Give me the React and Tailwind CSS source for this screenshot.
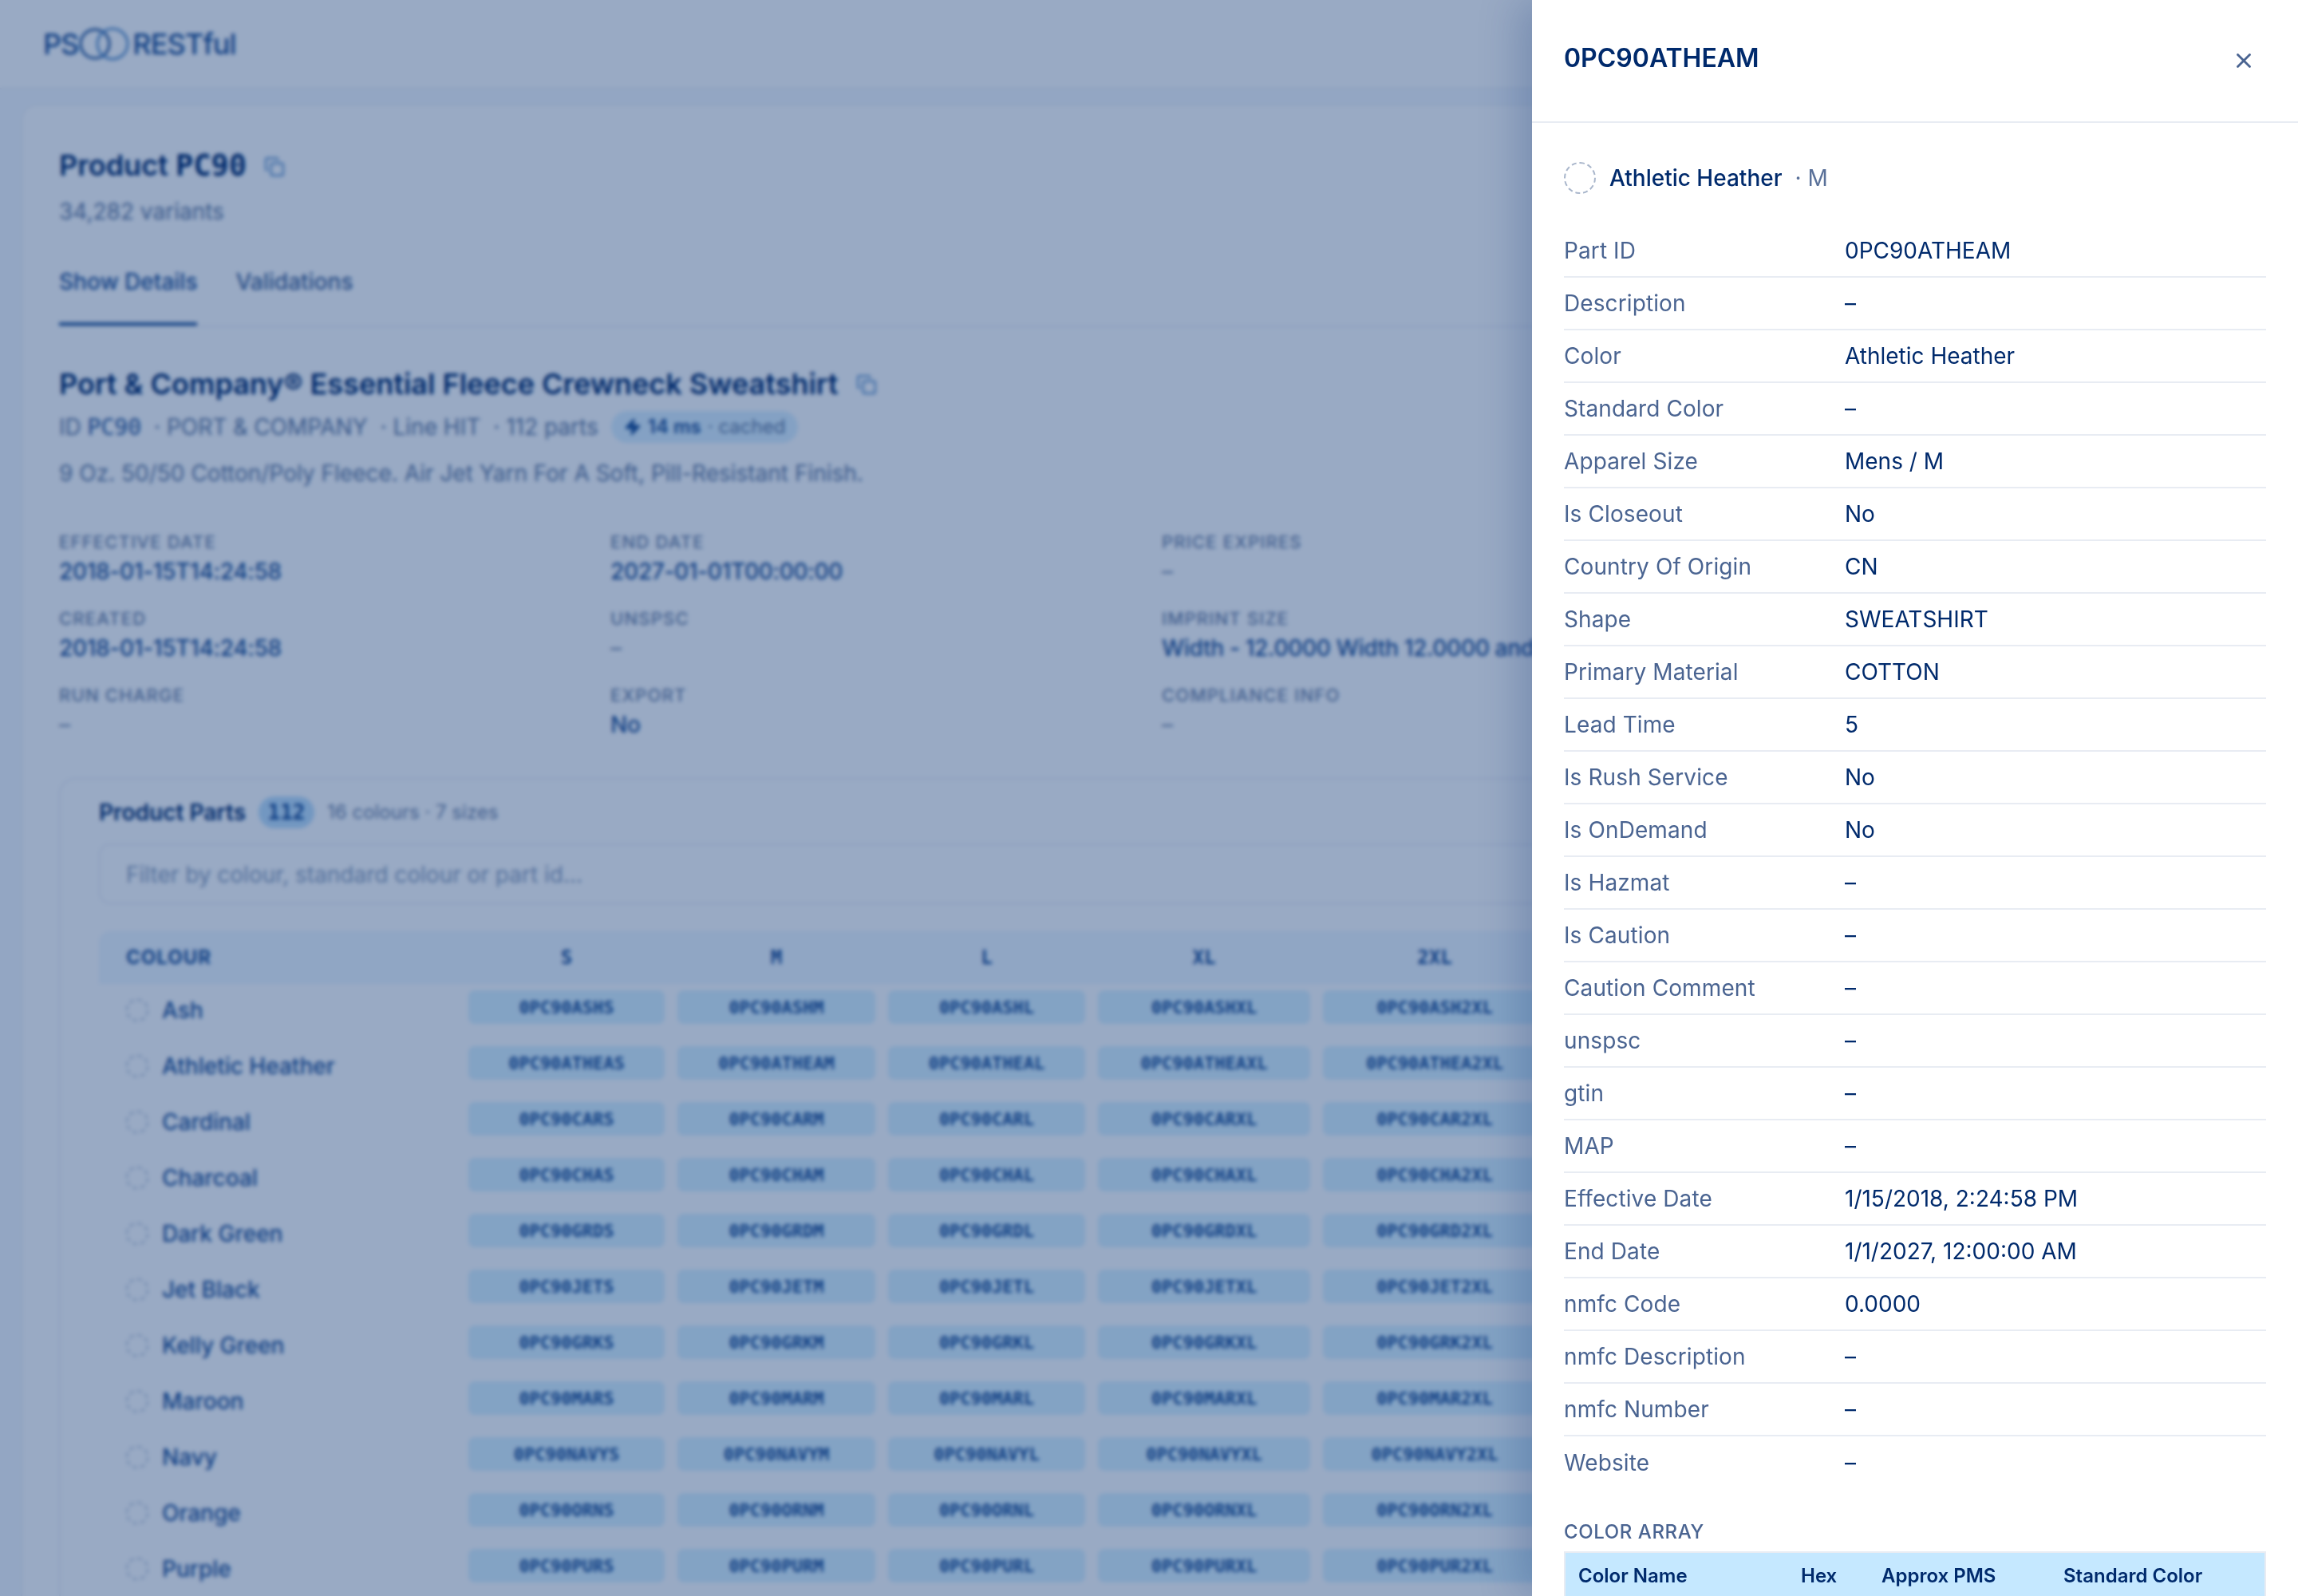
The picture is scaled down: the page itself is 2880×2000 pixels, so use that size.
import React from "react";
import { X, Copy, Zap } from "lucide-react";

const sizes = ["S", "M", "L", "XL", "2XL"];
const parts = [
  ["Ash", "ASH"], ["Athletic Heather", "ATHEA"], ["Cardinal", "CAR"], ["Charcoal", "CHA"],
  ["Dark Green", "GRD"], ["Jet Black", "JET"], ["Kelly Green", "GRK"], ["Maroon", "MAR"],
  ["Navy", "NAVY"], ["Orange", "ORN"], ["Purple", "PUR"],
];
const meta = [
  ["EFFECTIVE DATE", "2018-01-15T14:24:58"], ["END DATE", "2027-01-01T00:00:00"], ["PRICE EXPIRES", "–"],
  ["CREATED", "2018-01-15T14:24:58"], ["UNSPSC", "–"], ["IMPRINT SIZE", "Width - 12.0000 Width 12.0000 and Height 12.0000"],
  ["RUN CHARGE", "–"], ["EXPORT", "No"], ["COMPLIANCE INFO", "–"],
];
const rows = [
  ["Part ID", "0PC90ATHEAM"], ["Description", "–"], ["Color", "Athletic Heather"], ["Standard Color", "–"],
  ["Apparel Size", "Mens / M"], ["Is Closeout", "No"], ["Country Of Origin", "CN"], ["Shape", "SWEATSHIRT"],
  ["Primary Material", "COTTON"], ["Lead Time", "5"], ["Is Rush Service", "No"], ["Is OnDemand", "No"],
  ["Is Hazmat", "–"], ["Is Caution", "–"], ["Caution Comment", "–"], ["unspsc", "–"], ["gtin", "–"], ["MAP", "–"],
  ["Effective Date", "1/15/2018, 2:24:58 PM"], ["End Date", "1/1/2027, 12:00:00 AM"], ["nmfc Code", "0.0000"],
  ["nmfc Description", "–"], ["nmfc Number", "–"], ["Website", "–"],
];

function Logo() {
  return (
    <div className="flex items-center text-[36px] leading-none font-medium tracking-[-1px] text-[#1c4f96]">
      <span>PS</span>
      <svg width="76" height="48" viewBox="0 0 76 48" className="mx-[-4px]" fill="none">
        <circle cx="25" cy="24" r="18" stroke="#1c4f96" strokeWidth="3" />
        <circle cx="47" cy="24" r="19" stroke="#5a90cc" strokeWidth="3" />
      </svg>
      <span>RESTful</span>
    </div>
  );
}

function Page() {
  return (
    <div className="flex h-[2000px] w-[2880px] flex-col overflow-hidden bg-[#f6f9fe] text-[#002a6c]">
      <header className="flex h-[112px] shrink-0 items-center border-b-2 border-[#eef1f6] bg-white px-[54px]">
        <Logo />
      </header>
      <main className="pt-[18px] pl-[26px]">
        <section className="w-[2840px] rounded-t-[20px] border-2 border-[#eef1f6] bg-white px-[46px] pt-[48px]">
          <div className="flex items-center gap-[22px]">
            <h1 className="text-[36px] leading-[54px] font-semibold">
              Product <span className="font-['DejaVu_Sans_Mono',monospace] text-[37px]">PC90</span>
            </h1>
            <Copy size={26} className="mt-[2px] text-[#5a90cc]" />
          </div>
          <p className="mt-[8px] text-[28px] leading-[44px] text-[#5f789f]">34,282 variants</p>
          <nav className="mt-[46px] flex gap-[48px] border-b-2 border-[#eef1f6] text-[28px] font-medium">
            <span className="border-b-4 border-[#1c4f96] pb-[31px] leading-[40px] text-[#1c4f96]">Show Details</span>
            <span className="leading-[40px] text-[#3f6296]">Validations</span>
          </nav>
          <div className="mt-[43px] flex items-center gap-[22px]">
            <h2 className="text-[36px] leading-[56px] font-semibold">Port &amp; Company® Essential Fleece Crewneck Sweatshirt</h2>
            <Copy size={26} className="mt-[2px] text-[#5a90cc]" />
          </div>
          <div className="mt-[4px] flex h-[44px] items-center gap-[16px] text-[28px] text-[#5f789f]">
            <span>ID <span className="font-['DejaVu_Sans_Mono',monospace] font-medium text-[#1c4f96]">PC90</span></span>
            <span>·&nbsp;PORT &amp; COMPANY</span>
            <span>·&nbsp;Line HIT</span>
            <span>·&nbsp;112 parts</span>
            <span className="flex h-[40px] items-center gap-[8px] rounded-full bg-[#dcf1ff] px-[16px] text-[24px]">
              <Zap size={22} fill="#1c4f96" className="text-[#1c4f96]" />
              <span className="font-semibold text-[#1c4f96]">14 ms</span> · cached
            </span>
          </div>
          <p className="mt-[14px] text-[28px] leading-[44px] text-[#5f789f]">9 Oz. 50/50 Cotton/Poly Fleece. Air Jet Yarn For A Soft, Pill-Resistant Finish.</p>
          <div className="mt-[48px] grid grid-cols-[691px_691px_691px] gap-y-[12px] whitespace-nowrap">
            {meta.map(([k, v]) => (
              <div key={k} className="h-[84px]">
                <div className="text-[22px] leading-[32px] font-medium tracking-[1.2px] text-[#6f83a6]">{k}</div>
                <div className={v === "–" ? "mt-[1px] text-[28px] leading-[40px] text-[#6f83a6]" : "mt-[1px] text-[28px] leading-[40px] font-medium tracking-[-0.3px] text-[#1c4f96]"}>{v}</div>
              </div>
            ))}
          </div>
          <div className="mt-[36px] w-[2760px] rounded-t-[20px] border-2 border-[#eef1f6] px-[48px] pt-[20px]">
            <div className="flex h-[42px] items-center gap-[16px]">
              <span className="text-[28px] font-semibold">Product Parts</span>
              <span className="flex h-[40px] w-[70px] items-center justify-center rounded-full bg-[#bfe0fb] font-['DejaVu_Sans_Mono',monospace] text-[26px] font-semibold text-[#1c4f96]">112</span>
              <span className="text-[24px] text-[#6f83a6]">16 colours · 7 sizes</span>
            </div>
            <div className="mt-[18px] flex h-[76px] items-center rounded-[14px] border-2 border-[#eef1f6] px-[32px] pt-[2px] text-[28px] text-[#8da0bd]">Filter by colour, standard colour or part id...</div>
            <div className="mt-[34px] grid h-[66px] grid-cols-[455px_262px_264px_263px_282px_296px] items-center rounded-t-[14px] bg-[#f0f8ff] text-[24px] font-bold text-[#1c4f96]">
              <span className="pl-[34px] tracking-[1px]">COLOUR</span>
              {sizes.map((s) => (
                <span key={s} className="text-center font-['DejaVu_Sans_Mono',monospace]">{s}</span>
              ))}
            </div>
            {parts.map(([name, code]) => (
              <div key={code} className="grid h-[70px] grid-cols-[455px_262px_264px_263px_282px_296px] items-start">
                <div className="flex h-[66px] items-center gap-[17px] pl-[34px] text-[28px] leading-none font-medium text-[#1c4f96]">
                  <span className="h-[28px] w-[28px] rounded-full border-2 border-dashed border-[#b5c3d8]" />
                  {name}
                </div>
                {sizes.map((s) => (
                  <div key={s} className="px-[8px] pt-[8px]">
                    <div className="flex h-[42px] items-center justify-center rounded-[8px] bg-[#dbf3ff] font-['DejaVu_Sans_Mono',monospace] text-[22px] font-semibold whitespace-nowrap text-[#1c4f96]">
                      0PC90{code}{s}
                    </div>
                  </div>
                ))}
              </div>
            ))}
          </div>
        </section>
      </main>
    </div>
  );
}

function Drawer() {
  return (
    <aside className="absolute top-0 right-0 flex h-[2000px] w-[960px] flex-col overflow-hidden bg-white text-[#002a6c] shadow-[-16px_0_48px_rgba(0,42,108,0.22)]">
      <div className="flex h-[154px] shrink-0 items-start justify-between border-b-2 border-[#e8ecf3] px-[40px] pt-[49px]">
        <h2 className="text-[32px] leading-[48px] font-semibold">0PC90ATHEAM</h2>
        <X size={30} strokeWidth={2.25} className="mt-[12px] mr-[13px] text-[#4a6491]" />
      </div>
      <div className="px-[40px]">
        <div className="mt-[49px] flex h-[40px] items-center text-[28px]">
          <span className="mr-[17px] h-[40px] w-[40px] rounded-full border-2 border-dashed border-[#a9b6cb]" />
          <span className="font-medium">Athletic Heather</span>
          <span className="ml-[16px] text-[#5a7199]">· M</span>
        </div>
        <div className="mt-[39px]">
          {rows.map(([k, v]) => (
            <div key={k} className="grid h-[66px] grid-cols-[352px_1fr] items-center border-b-2 border-[#e8ecf3] text-[28px] leading-none last:border-b-0">
              <span className="tracking-[0.1px] text-[#4a6491]">{k}</span>
              <span>{v}</span>
            </div>
          ))}
        </div>
        <div className="mt-[36px] text-[24px] leading-[36px] font-medium tracking-[0.6px] text-[#4a6491]">COLOR ARRAY</div>
        <div className="mt-[6px] grid h-[70px] grid-cols-[279px_101px_228px_1fr] items-center border-2 border-b-0 border-[#e8ecf3] bg-[#c5e8ff] pb-[10px] pl-[16px] text-[24px] font-semibold">
          <span>Color Name</span>
          <span>Hex</span>
          <span>Approx PMS</span>
          <span>Standard Color</span>
        </div>
      </div>
    </aside>
  );
}

export default function App() {
  return (
    <div className="relative h-[2000px] w-[2880px] overflow-hidden font-['Inter',sans-serif]">
      <Page />
      <div className="absolute inset-0 bg-[#002a6c]/40 backdrop-blur-[2.5px]" />
      <Drawer />
    </div>
  );
}
